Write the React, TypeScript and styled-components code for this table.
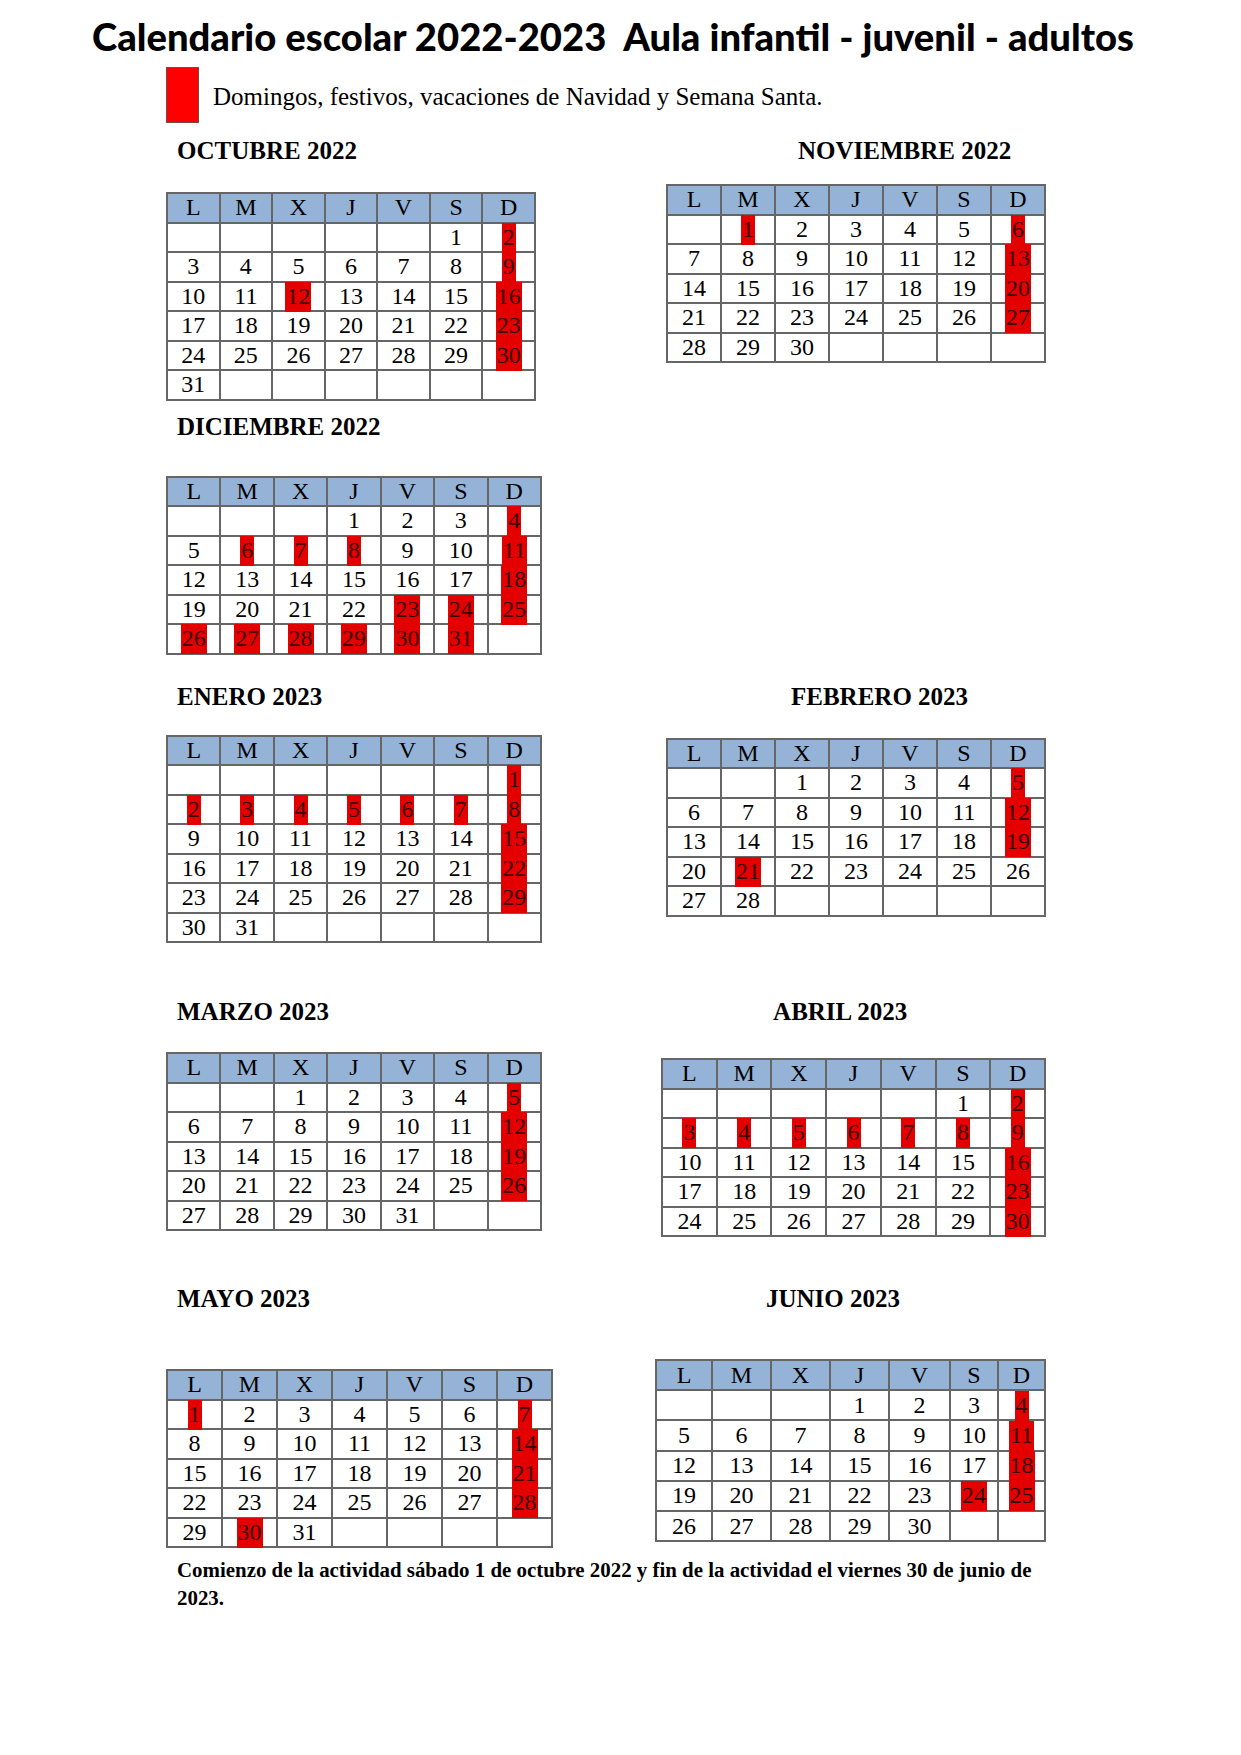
import React from 'react';
import styled, { createGlobalStyle } from 'styled-components';

const GlobalStyle = createGlobalStyle`
  body {
    margin: 0;
    background: #ffffff;
    color: #000000;
  }
`;

const Page = styled.div`
  width: 1241px;
  min-height: 1755px;
  padding-top: 16px;
  box-sizing: border-box;
`;

const Title = styled.h1`
  margin: 0;
  padding-left: 92px;
  height: 40px;
  line-height: 40px;
  font-family: 'Lato', 'Open Sans', sans-serif;
  font-weight: 900;
  font-size: 38.2px;
  white-space: pre;
`;

const Legend = styled.div`
  display: flex;
  align-items: center;
  margin: 11px 0 0 166px;
`;

const LegendSwatch = styled.div`
  width: 31px;
  height: 54px;
  background: #ff0000;
  border: 1px solid #7a4a4a;
`;

const LegendText = styled.span`
  margin-left: 14px;
  padding-top: 4px;
  font-family: 'Liberation Serif', 'Times New Roman', serif;
  font-size: 25px;
`;

const Content = styled.div`
  width: 880px;
  margin-left: 166px;
`;

const MonthRow = styled.div<{ $top: number }>`
  display: flex;
  justify-content: space-between;
  align-items: flex-start;
  margin-top: ${(p) => p.$top}px;
`;

const MonthBlock = styled.section`
  display: flex;
  flex-direction: column;
`;

const MonthLabel = styled.h2<{ $indent: number }>`
  margin: 0 0 0 ${(p) => p.$indent}px;
  height: 28px;
  line-height: 28px;
  font-family: 'Liberation Serif', 'Times New Roman', serif;
  font-weight: 700;
  font-size: 25px;
  white-space: nowrap;
`;

const Table = styled.table<{ $gap: number; $width: number; $row: number }>`
  margin-top: ${(p) => p.$gap}px;
  width: ${(p) => p.$width}px;
  border-collapse: collapse;
  table-layout: fixed;
  font-family: 'Liberation Serif', 'Times New Roman', serif;
  font-size: 24px;

  th,
  td {
    height: ${(p) => p.$row}px;
  }
`;

const HeadCell = styled.th`
  padding: 0;
  line-height: 27px;
  font-weight: 400;
  text-align: center;
  background: #95b3d7;
  border: 2px solid #666666;
`;

const DayCell = styled.td`
  padding: 0;
  line-height: 27px;
  text-align: center;
  border: 2px solid #666666;
`;

const Mark = styled.span`
  display: inline-block;
  vertical-align: top;
  height: 30px;
  line-height: 29px;
  margin: -1px 0 -2px;
  padding: 0 1px;
  background: #e50000;
  color: #3a0000;
`;

const Footer = styled.p`
  margin: 8px 0 0 11px;
  width: 869px;
  font-family: 'Liberation Serif', 'Times New Roman', serif;
  font-weight: 700;
  font-size: 20.9px;
  line-height: 28px;
`;

type Month = {
  name: string;
  offset: number;
  days: number;
  red: number[];
  width: number;
  indent: number;
  gap: number;
  row?: number;
  cols?: number[];
};

const WEEK = ['L', 'M', 'X', 'J', 'V', 'S', 'D'];

const rows: { top: number; months: Month[] }[] = [
  {
    top: 14,
    months: [
      { name: 'OCTUBRE 2022', offset: 5, days: 31, red: [2, 9, 12, 16, 23, 30], width: 368, indent: 11, gap: 27 },
      { name: 'NOVIEMBRE 2022', offset: 1, days: 30, red: [1, 6, 13, 20, 27], width: 378, indent: 132, gap: 19 },
    ],
  },
  {
    top: 12,
    months: [
      {
        name: 'DICIEMBRE 2022',
        offset: 3,
        days: 31,
        red: [4, 6, 7, 8, 11, 18, 23, 24, 25, 26, 27, 28, 29, 30, 31],
        width: 374,
        indent: 11,
        gap: 35,
      },
    ],
  },
  {
    top: 28,
    months: [
      { name: 'ENERO 2023', offset: 6, days: 31, red: [1, 2, 3, 4, 5, 6, 7, 8, 15, 22, 29], width: 374, indent: 11, gap: 24 },
      { name: 'FEBRERO 2023', offset: 2, days: 28, red: [5, 12, 19, 21], width: 378, indent: 125, gap: 27 },
    ],
  },
  {
    top: 55,
    months: [
      { name: 'MARZO 2023', offset: 2, days: 31, red: [5, 12, 19, 26], width: 374, indent: 11, gap: 26 },
      { name: 'ABRIL 2023', offset: 5, days: 30, red: [2, 3, 4, 5, 6, 7, 8, 9, 16, 23, 30], width: 383, indent: 112, gap: 32 },
    ],
  },
  {
    top: 48,
    months: [
      { name: 'MAYO 2023', offset: 0, days: 31, red: [1, 7, 14, 21, 28, 30], width: 385, indent: 11, gap: 56 },
      {
        name: 'JUNIO 2023',
        offset: 3,
        days: 30,
        red: [4, 11, 18, 24, 25],
        width: 389,
        indent: 111,
        gap: 46,
        row: 28.2,
        cols: [56, 59, 59, 59, 61, 48, 47],
      },
    ],
  },
];

const weeksOf = (m: Month) => {
  const cells: (number | null)[] = [];
  for (let i = 0; i < m.offset; i++) cells.push(null);
  for (let d = 1; d <= m.days; d++) cells.push(d);
  while (cells.length % 7 !== 0) cells.push(null);
  const weeks: (number | null)[][] = [];
  for (let i = 0; i < cells.length; i += 7) weeks.push(cells.slice(i, i + 7));
  return weeks;
};

const MonthTable: React.FC<{ month: Month }> = ({ month }) => {
  const cols = month.cols ?? WEEK.map(() => month.width / 7);
  return (
    <MonthBlock>
      <MonthLabel $indent={month.indent}>{month.name}</MonthLabel>
      <Table $gap={month.gap} $width={month.width} $row={month.row ?? 27.5}>
        <colgroup>
          {cols.map((w, i) => (
            <col key={i} style={{ width: w }} />
          ))}
        </colgroup>
        <thead>
          <tr>
            {WEEK.map((d) => (
              <HeadCell key={d}>{d}</HeadCell>
            ))}
          </tr>
        </thead>
        <tbody>
          {weeksOf(month).map((week, wi) => (
            <tr key={wi}>
              {week.map((day, di) => (
                <DayCell key={di}>
                  {day !== null && (month.red.includes(day) ? <Mark>{day}</Mark> : day)}
                </DayCell>
              ))}
            </tr>
          ))}
        </tbody>
      </Table>
    </MonthBlock>
  );
};

const App: React.FC = () => (
  <Page>
    <GlobalStyle />
    <Title>{'Calendario escolar 2022-2023  Aula infantil - juvenil - adultos'}</Title>
    <Legend>
      <LegendSwatch />
      <LegendText>Domingos, festivos, vacaciones de Navidad y Semana Santa.</LegendText>
    </Legend>
    <Content>
      {rows.map((row, ri) => (
        <MonthRow key={ri} $top={row.top}>
          {row.months.map((m) => (
            <MonthTable key={m.name} month={m} />
          ))}
        </MonthRow>
      ))}
      <Footer>
        Comienzo de la actividad sábado 1 de octubre 2022 y fin de la actividad el viernes 30 de junio de 2023.
      </Footer>
    </Content>
  </Page>
);

export default App;
